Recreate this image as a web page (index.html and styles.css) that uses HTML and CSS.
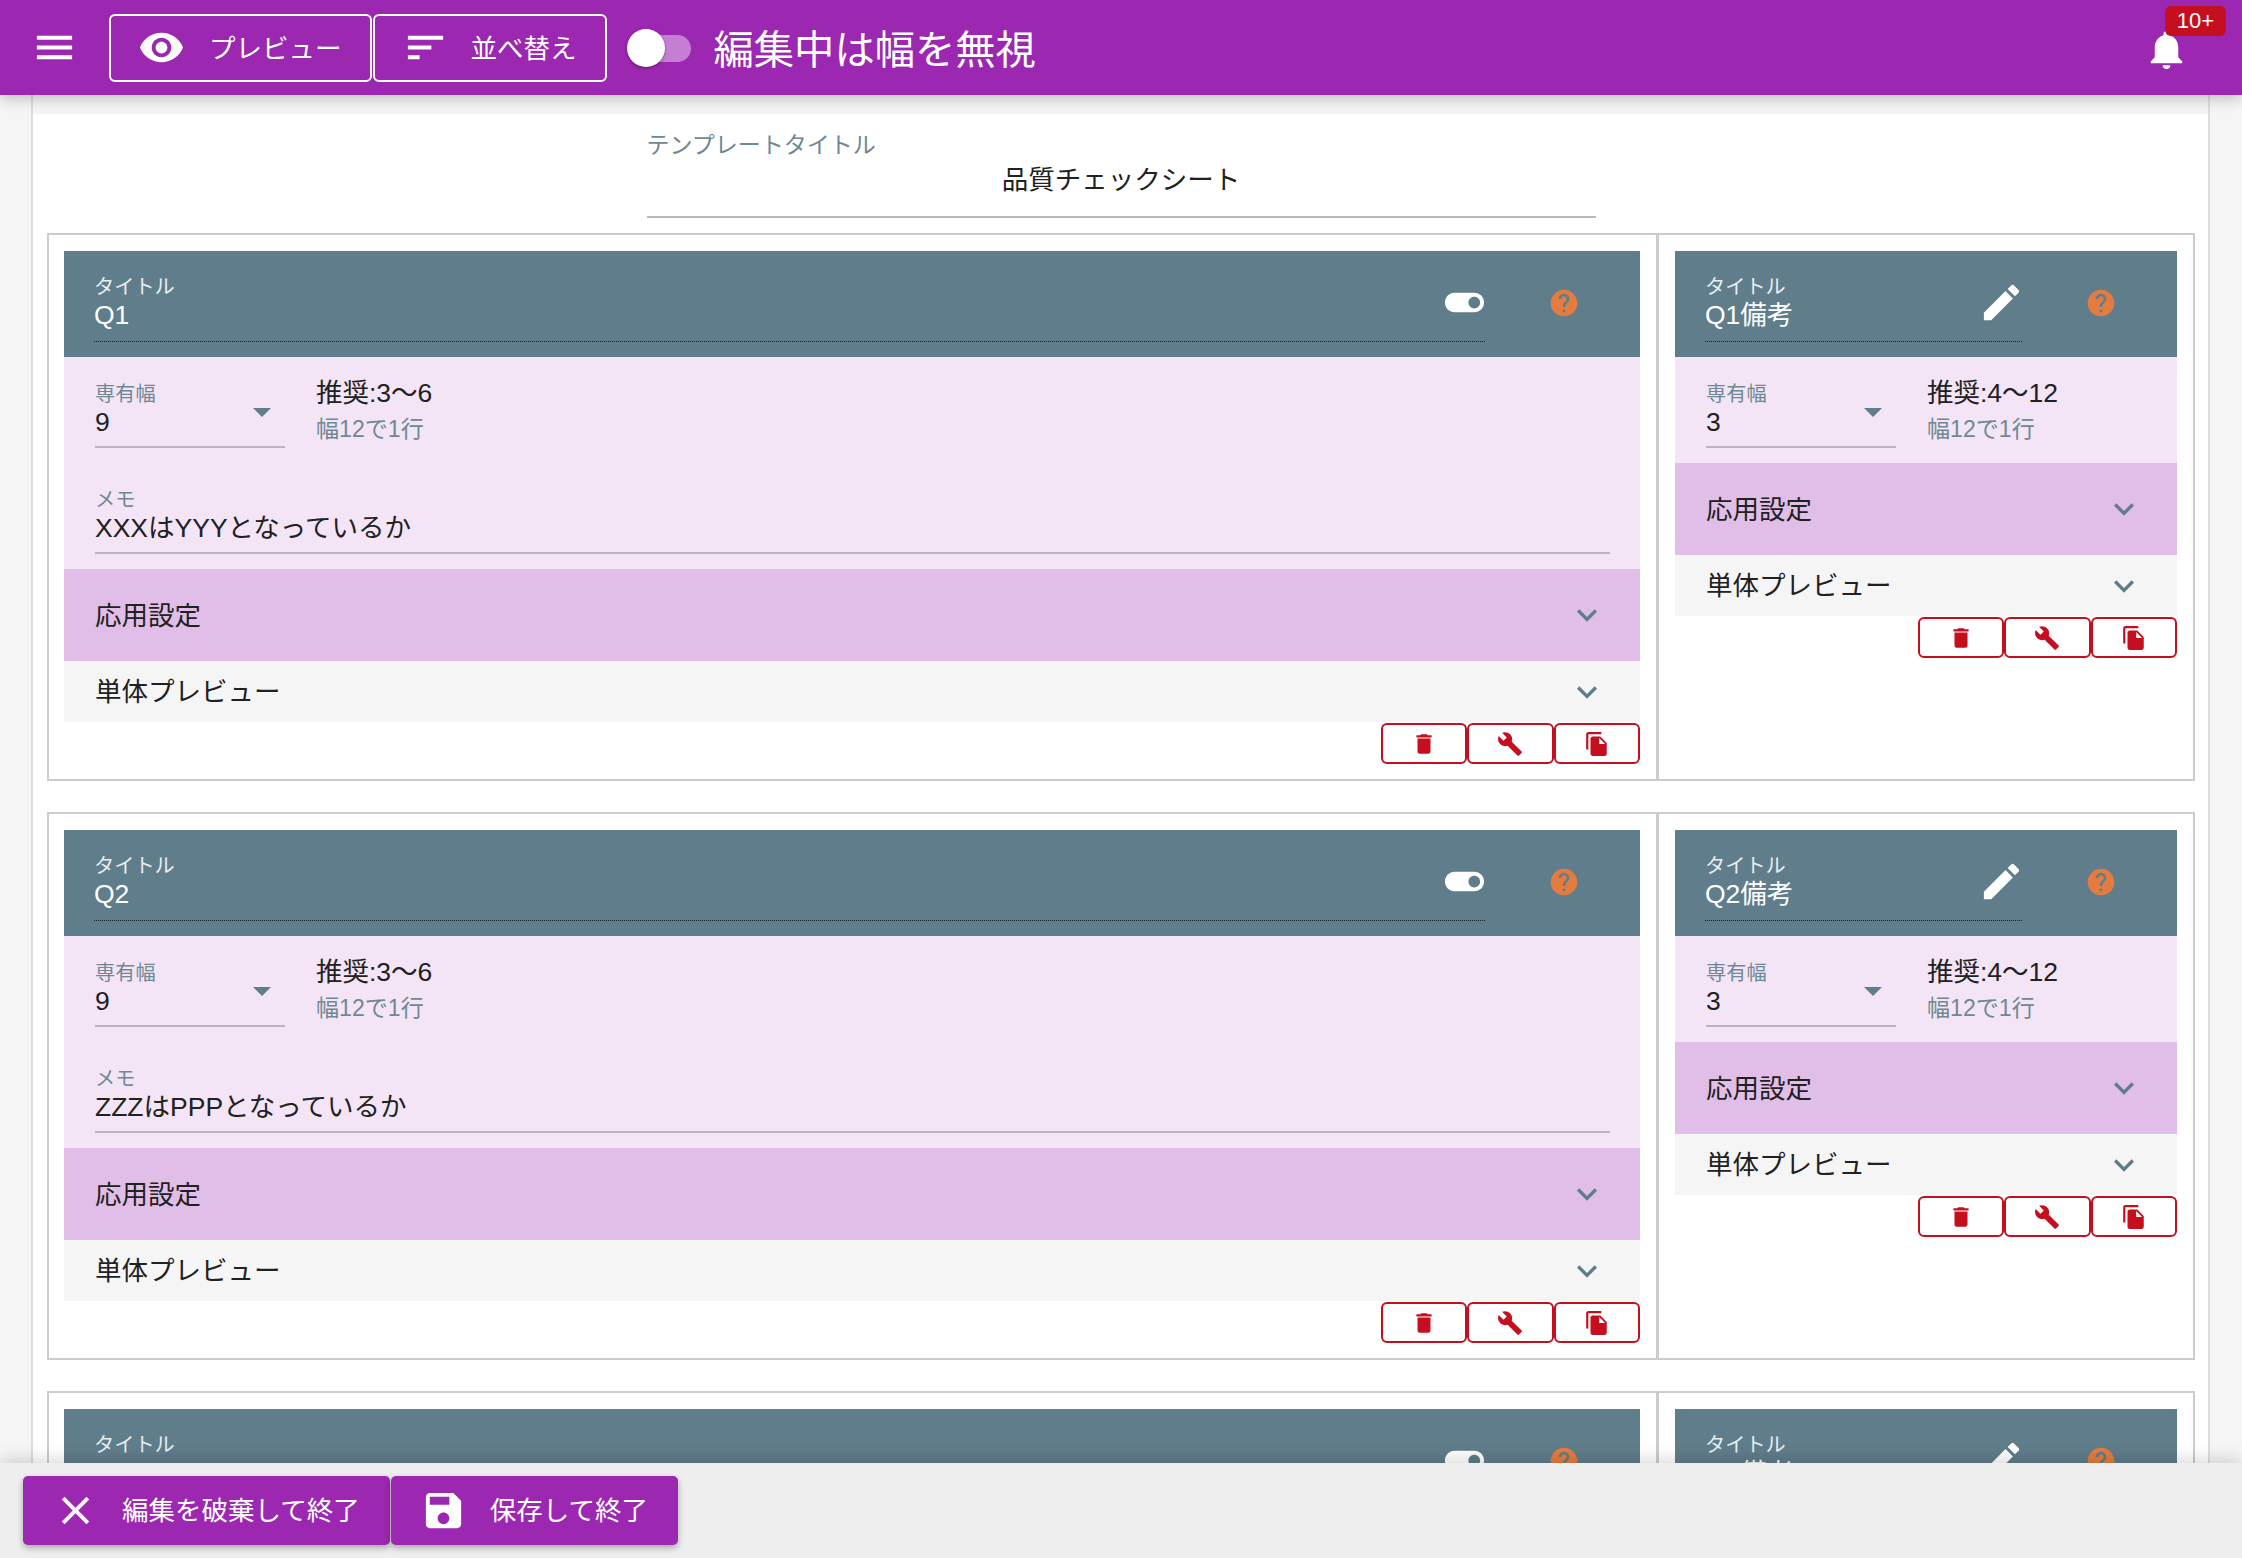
FILE: index.html
```html
<!DOCTYPE html>
<html lang="ja">
<head>
    <meta charset="UTF-8">
    <meta name="viewport" content="width=device-width, initial-scale=1.0">
    <title>テンプレート編集</title>
    <link rel="stylesheet" href="styles.css">
</head>
<body>
    <!-- Icon set, used through <use> below -->
    <svg class="icon-defs" xmlns="http://www.w3.org/2000/svg">
        <symbol id="i-menu" viewBox="0 0 24 24"><path d="M3 18h18v-2H3v2zm0-5h18v-2H3v2zm0-7v2h18V6H3z"/></symbol>
        <symbol id="i-eye" viewBox="0 0 24 24"><path d="M12 4.5C7 4.5 2.73 7.61 1 12c1.73 4.39 6 7.5 11 7.5s9.27-3.11 11-7.5c-1.73-4.39-6-7.5-11-7.5zM12 17c-2.76 0-5-2.24-5-5s2.24-5 5-5 5 2.24 5 5-2.24 5-5 5zm0-8c-1.66 0-3 1.34-3 3s1.34 3 3 3 3-1.34 3-3-1.34-3-3-3z"/></symbol>
        <symbol id="i-sort" viewBox="0 0 24 24"><path d="M3 18h6v-2H3v2zM3 6v2h18V6H3zm0 7h12v-2H3v2z"/></symbol>
        <symbol id="i-bell" viewBox="0 0 24 24"><path d="M12 22c1.1 0 2-.9 2-2h-4c0 1.1.89 2 2 2zm6-6v-5c0-3.07-1.64-5.64-4.5-6.32V4c0-.83-.67-1.5-1.5-1.5s-1.5.67-1.5 1.5v.68C7.63 5.36 6 7.92 6 11v5l-2 2v1h16v-1l-2-2z"/></symbol>
        <symbol id="i-toggle" viewBox="0 0 24 24"><path d="M17 7H7c-2.76 0-5 2.24-5 5s2.24 5 5 5h10c2.76 0 5-2.24 5-5s-2.24-5-5-5zm0 8c-1.66 0-3-1.34-3-3s1.34-3 3-3 3 1.34 3 3-1.34 3-3 3z"/></symbol>
        <symbol id="i-edit" viewBox="0 0 24 24"><path d="M3 17.25V21h3.75L17.81 9.94l-3.75-3.75L3 17.25zM20.71 7.04c.39-.39.39-1.02 0-1.41l-2.34-2.34c-.39-.39-1.02-.39-1.41 0l-1.83 1.83 3.75 3.75 1.83-1.83z"/></symbol>
        <symbol id="i-help" viewBox="0 0 24 24"><path d="M12 2C6.48 2 2 6.48 2 12s4.48 10 10 10 10-4.48 10-10S17.52 2 12 2zm1 17h-2v-2h2v2zm2.07-7.75l-.9.92C13.45 12.9 13 13.5 13 15h-2v-.5c0-1.1.45-2.1 1.17-2.83l1.24-1.26c.37-.36.59-.86.59-1.41 0-1.1-.9-2-2-2s-2 .9-2 2H8c0-2.21 1.79-4 4-4s4 1.79 4 4c0 .88-.36 1.68-.93 2.25z"/></symbol>
        <symbol id="i-chevron" viewBox="0 0 24 24"><path d="M16.59 8.59L12 13.17 7.41 8.59 6 10l6 6 6-6z"/></symbol>
        <symbol id="i-trash" viewBox="0 0 24 24"><path d="M6 19c0 1.1.9 2 2 2h8c1.1 0 2-.9 2-2V7H6v12zM19 4h-3.5l-1-1h-5l-1 1H5v2h14V4z"/></symbol>
        <symbol id="i-wrench" viewBox="0 0 24 24"><path d="M22.7 19l-9.1-9.1c.9-2.3.4-5-1.5-6.9-2-2-5-2.4-7.4-1.3L9 6 6 9 1.6 4.7C.4 7.1.9 10.1 2.9 12.1c1.9 1.9 4.6 2.4 6.9 1.5l9.1 9.1c.4.4 1 .4 1.4 0l2.3-2.3c.5-.4.5-1.1.1-1.4z"/></symbol>
        <symbol id="i-copy" viewBox="0 0 24 24"><path d="M16 1H4c-1.1 0-2 .9-2 2v14h2V3h12V1zm-1 4l6 6v10c0 1.1-.9 2-2 2H7.99C6.89 23 6 22.1 6 21l.01-14c0-1.1.89-2 1.99-2h7zm-1 7h5.5L14 6.5V12z"/></symbol>
        <symbol id="i-close" viewBox="0 0 24 24"><path d="M19 6.41L17.59 5 12 10.59 6.41 5 5 6.41 10.59 12 5 17.59 6.41 19 12 13.41 17.59 19 19 17.59 13.41 12z"/></symbol>
        <symbol id="i-save" viewBox="0 0 24 24"><path d="M17 3H5c-1.11 0-2 .9-2 2v14c0 1.1.89 2 2 2h14c1.1 0 2-.9 2-2V7l-4-4zm-5 16c-1.66 0-3-1.34-3-3s1.34-3 3-3 3 1.34 3 3-1.34 3-3 3zm3-10H5V5h10v4z"/></symbol>
    </svg>

    <div class="app">
        <!-- Top bar -->
        <header class="topbar">
            <svg class="icon-lg"><use href="#i-menu"/></svg>
            <button class="outline-btn first">
                <svg class="icon-lg"><use href="#i-eye"/></svg>
                <span>プレビュー</span>
            </button>
            <button class="outline-btn second">
                <svg class="icon-lg"><use href="#i-sort"/></svg>
                <span>並べ替え</span>
            </button>
            <div class="switch"><div class="switch-thumb"></div></div>
            <div class="topbar-title">編集中は幅を無視</div>
            <div class="bell">
                <svg class="icon-lg"><use href="#i-bell"/></svg>
                <div class="badge">10+</div>
            </div>
        </header>

        <main class="content">
            <div class="sheet">
                <div class="sheet-title">
                    <div class="sheet-title-label">テンプレートタイトル</div>
                    <div class="sheet-title-value">品質チェックシート</div>
                </div>

                <!-- Q1 -->
                <section class="row">
                    <div class="cell cell-main">
                        <div class="card-head">
                            <div class="head-field">
                                <div class="head-text">
                                    <div class="label">タイトル</div>
                                    <div class="value">Q1</div>
                                </div>
                                <svg class="icon-lg head-icon"><use href="#i-toggle"/></svg>
                            </div>
                            <svg class="help"><use href="#i-help"/></svg>
                        </div>
                        <div class="card-body">
                            <div class="width-row">
                                <div class="field select">
                                    <div class="label">専有幅</div>
                                    <div class="select-line"><div class="value">9</div><div class="arrow"></div></div>
                                </div>
                                <div class="hint">
                                    <div class="hint-main">推奨:3〜6</div>
                                    <div class="hint-sub">幅12で1行</div>
                                </div>
                            </div>
                            <div class="field">
                                <div class="label">メモ</div>
                                <div class="value">XXXはYYYとなっているか</div>
                            </div>
                        </div>
                        <div class="accordion advanced"><span>応用設定</span><svg class="chevron"><use href="#i-chevron"/></svg></div>
                        <div class="accordion preview"><span>単体プレビュー</span><svg class="chevron"><use href="#i-chevron"/></svg></div>
                        <div class="actions">
                            <button class="action-btn"><svg><use href="#i-trash"/></svg></button>
                            <button class="action-btn"><svg><use href="#i-wrench"/></svg></button>
                            <button class="action-btn"><svg><use href="#i-copy"/></svg></button>
                        </div>
                    </div>
                    <div class="cell cell-side">
                        <div class="card-head">
                            <div class="head-field">
                                <div class="head-text">
                                    <div class="label">タイトル</div>
                                    <div class="value">Q1備考</div>
                                </div>
                                <svg class="icon-lg head-icon"><use href="#i-edit"/></svg>
                            </div>
                            <svg class="help"><use href="#i-help"/></svg>
                        </div>
                        <div class="card-body">
                            <div class="width-row">
                                <div class="field select">
                                    <div class="label">専有幅</div>
                                    <div class="select-line"><div class="value">3</div><div class="arrow"></div></div>
                                </div>
                                <div class="hint">
                                    <div class="hint-main">推奨:4〜12</div>
                                    <div class="hint-sub">幅12で1行</div>
                                </div>
                            </div>
                        </div>
                        <div class="accordion advanced"><span>応用設定</span><svg class="chevron"><use href="#i-chevron"/></svg></div>
                        <div class="accordion preview"><span>単体プレビュー</span><svg class="chevron"><use href="#i-chevron"/></svg></div>
                        <div class="actions">
                            <button class="action-btn"><svg><use href="#i-trash"/></svg></button>
                            <button class="action-btn"><svg><use href="#i-wrench"/></svg></button>
                            <button class="action-btn"><svg><use href="#i-copy"/></svg></button>
                        </div>
                    </div>
                </section>

                <!-- Q2 -->
                <section class="row">
                    <div class="cell cell-main">
                        <div class="card-head">
                            <div class="head-field">
                                <div class="head-text">
                                    <div class="label">タイトル</div>
                                    <div class="value">Q2</div>
                                </div>
                                <svg class="icon-lg head-icon"><use href="#i-toggle"/></svg>
                            </div>
                            <svg class="help"><use href="#i-help"/></svg>
                        </div>
                        <div class="card-body">
                            <div class="width-row">
                                <div class="field select">
                                    <div class="label">専有幅</div>
                                    <div class="select-line"><div class="value">9</div><div class="arrow"></div></div>
                                </div>
                                <div class="hint">
                                    <div class="hint-main">推奨:3〜6</div>
                                    <div class="hint-sub">幅12で1行</div>
                                </div>
                            </div>
                            <div class="field">
                                <div class="label">メモ</div>
                                <div class="value">ZZZはPPPとなっているか</div>
                            </div>
                        </div>
                        <div class="accordion advanced"><span>応用設定</span><svg class="chevron"><use href="#i-chevron"/></svg></div>
                        <div class="accordion preview"><span>単体プレビュー</span><svg class="chevron"><use href="#i-chevron"/></svg></div>
                        <div class="actions">
                            <button class="action-btn"><svg><use href="#i-trash"/></svg></button>
                            <button class="action-btn"><svg><use href="#i-wrench"/></svg></button>
                            <button class="action-btn"><svg><use href="#i-copy"/></svg></button>
                        </div>
                    </div>
                    <div class="cell cell-side">
                        <div class="card-head">
                            <div class="head-field">
                                <div class="head-text">
                                    <div class="label">タイトル</div>
                                    <div class="value">Q2備考</div>
                                </div>
                                <svg class="icon-lg head-icon"><use href="#i-edit"/></svg>
                            </div>
                            <svg class="help"><use href="#i-help"/></svg>
                        </div>
                        <div class="card-body">
                            <div class="width-row">
                                <div class="field select">
                                    <div class="label">専有幅</div>
                                    <div class="select-line"><div class="value">3</div><div class="arrow"></div></div>
                                </div>
                                <div class="hint">
                                    <div class="hint-main">推奨:4〜12</div>
                                    <div class="hint-sub">幅12で1行</div>
                                </div>
                            </div>
                        </div>
                        <div class="accordion advanced"><span>応用設定</span><svg class="chevron"><use href="#i-chevron"/></svg></div>
                        <div class="accordion preview"><span>単体プレビュー</span><svg class="chevron"><use href="#i-chevron"/></svg></div>
                        <div class="actions">
                            <button class="action-btn"><svg><use href="#i-trash"/></svg></button>
                            <button class="action-btn"><svg><use href="#i-wrench"/></svg></button>
                            <button class="action-btn"><svg><use href="#i-copy"/></svg></button>
                        </div>
                    </div>
                </section>

                <!-- Q3, cut off by the footer -->
                <section class="row">
                    <div class="cell cell-main">
                        <div class="card-head">
                            <div class="head-field">
                                <div class="head-text">
                                    <div class="label">タイトル</div>
                                    <div class="value">Q3</div>
                                </div>
                                <svg class="icon-lg head-icon"><use href="#i-toggle"/></svg>
                            </div>
                            <svg class="help"><use href="#i-help"/></svg>
                        </div>
                    </div>
                    <div class="cell cell-side">
                        <div class="card-head">
                            <div class="head-field">
                                <div class="head-text">
                                    <div class="label">タイトル</div>
                                    <div class="value">Q3備考</div>
                                </div>
                                <svg class="icon-lg head-icon"><use href="#i-edit"/></svg>
                            </div>
                            <svg class="help"><use href="#i-help"/></svg>
                        </div>
                    </div>
                </section>
            </div>
        </main>

        <!-- Footer actions -->
        <footer class="footer">
            <button class="solid-btn">
                <svg class="icon-lg"><use href="#i-close"/></svg>
                <span>編集を破棄して終了</span>
            </button>
            <button class="solid-btn">
                <svg class="icon-lg"><use href="#i-save"/></svg>
                <span>保存して終了</span>
            </button>
        </footer>
    </div>
</body>
</html>
```

FILE: styles.css
```css
/* General */
html, body {
    margin: 0;
    padding: 0;
    height: 100%;
}
body {
    font-family: "Liberation Sans", "Noto Sans CJK JP", sans-serif;
    font-size: 26.5px;
    color: #212121;
    background-color: #f5f5f5;
    overflow: hidden;
}
button {
    font-family: inherit;
    font-size: inherit;
    cursor: pointer;
}
svg {
    fill: currentColor;
    flex: none;
    display: block;
}
.icon-defs {
    display: none;
}
.icon-lg {
    width: 47px;
    height: 47px;
}
.app {
    height: 100vh;
    display: flex;
    flex-direction: column;
}

/* Top bar */
.topbar {
    height: 95px;
    flex: none;
    display: flex;
    align-items: center;
    padding-left: 31px;
    background-color: #9c27b0;
    color: #fff;
    box-shadow: 0 3px 14px rgba(0, 0, 0, 0.25);
    position: relative;
    z-index: 2;
}
.outline-btn {
    height: 68px;
    display: flex;
    align-items: center;
    gap: 24px;
    padding: 0 28px 0 27px;
    background: none;
    border: 2px solid #fff;
    border-radius: 6px;
    color: #fff;
}
.outline-btn.first {
    margin-left: 31px;
}
.outline-btn.second {
    margin-left: 1px;
    gap: 22px;
}
.outline-btn span {
    margin-bottom: 2px;
}
.switch {
    width: 64px;
    height: 38px;
    margin-left: 20px;
    position: relative;
}
.switch::before {
    content: "";
    position: absolute;
    left: 6px;
    right: 0;
    top: 6px;
    bottom: 5px;
    border-radius: 14px;
    background-color: #c47ed3;
}
.switch-thumb {
    position: absolute;
    left: 0;
    top: 0;
    width: 38px;
    height: 38px;
    border-radius: 50%;
    background-color: #fff;
    box-shadow: 0 1px 3px rgba(0, 0, 0, 0.4);
}
.topbar-title {
    margin: 0 0 2px 23px;
    font-size: 40.3px;
}
.bell {
    margin-left: auto;
    margin-right: 52px;
    margin-top: 4px;
    position: relative;
}
.badge {
    position: absolute;
    left: 22px;
    top: -20px;
    width: 61px;
    height: 30px;
    line-height: 30px;
    text-align: center;
    font-size: 22px;
    border-radius: 6px;
    background-color: #c50f1f;
}

/* Sheet */
.content {
    flex: 1;
    min-height: 0;
    overflow: hidden;
}
.sheet {
    margin: 0 32px 0 31px;
    padding: 38px 13px 0 14px;
    border-left: 2px solid #ddd;
    border-right: 2px solid #ddd;
    background: linear-gradient(#f5f5f5 19px, #fff 19px);
}
.sheet-title {
    width: 949px;
    margin: 0 auto 15px;
    padding-bottom: 20px;
    border-bottom: 2px solid #bbb;
}
.sheet-title-label {
    font-size: 23px;
    line-height: 24px;
    color: #6f8894;
}
.sheet-title-value {
    margin-top: 7px;
    line-height: 32px;
    text-align: center;
}
.row {
    display: grid;
    grid-template-columns: 9fr 3fr;
    margin-bottom: 31px;
}
.cell {
    border: 2px solid #ccc;
    padding: 16px 16px 15px 15px;
}
.cell-side {
    border-left-width: 1px;
    padding-left: 16px;
}

/* Card header */
.card-head {
    height: 106px;
    box-sizing: border-box;
    display: flex;
    align-items: flex-start;
    gap: 63px;
    padding: 23px 60px 0 30px;
    background-color: #607d8b;
    color: #fff;
}
.head-field {
    flex: 1;
    display: flex;
    padding-bottom: 10px;
    border-bottom: 1px dotted rgba(0, 0, 0, 0.75);
}
.head-text {
    flex: 1;
}
.head-icon {
    margin: 5px -3px 0 0;
}
.help {
    width: 32px;
    height: 32px;
    margin-top: 13px;
    color: #e57c3f;
}
.label {
    font-size: 20.2px;
    line-height: 26px;
    color: #6f8894;
}
.value {
    line-height: 32px;
    margin-top: -1px;
}
.card-head .label {
    color: #e8edf0;
}

/* Card body */
.card-body {
    display: flex;
    flex-direction: column;
    gap: 39px;
    padding: 24px 30px 15px 31px;
    background-color: #f3e5f5;
}
.width-row {
    display: flex;
    gap: 31px;
}
.field {
    padding-bottom: 8px;
    border-bottom: 2px solid #bdb3c0;
}
.select {
    width: 190px;
}
.select-line {
    display: flex;
    justify-content: space-between;
}
.arrow {
    width: 0;
    height: 0;
    margin: 1px 14px 0 0;
    border-left: 9.5px solid transparent;
    border-right: 9.5px solid transparent;
    border-top: 9px solid #607d8b;
}
.hint {
    margin-top: -4px;
}
.hint-main {
    line-height: 32px;
}
.hint-sub {
    margin-top: 6px;
    font-size: 23.1px;
    line-height: 28px;
    color: #6f8894;
}

/* Accordions */
.accordion {
    display: flex;
    align-items: center;
    justify-content: space-between;
    padding: 0 33px 0 31px;
}
.accordion span {
    margin-bottom: 4px;
}
.accordion.advanced {
    height: 92px;
    background-color: #e1bee7;
}
.accordion.preview {
    height: 61px;
    background-color: #f5f5f5;
}
.chevron {
    width: 40px;
    height: 40px;
    color: #607d8b;
}

/* Small red buttons */
.actions {
    display: flex;
    justify-content: flex-end;
    margin-top: 1px;
}
.action-btn {
    width: 86.5px;
    height: 41px;
    padding: 0;
    display: flex;
    align-items: center;
    justify-content: center;
    background-color: #fff;
    border: 2px solid #c50f1f;
    border-radius: 6px;
    color: #c50f1f;
}
.action-btn svg {
    width: 26px;
    height: 26px;
}

/* Footer */
.footer {
    height: 95px;
    flex: none;
    box-sizing: border-box;
    display: flex;
    gap: 1px;
    padding: 13px 0 0 23px;
    background-color: #eee;
    box-shadow: 0 -4px 16px rgba(0, 0, 0, 0.15);
    position: relative;
    z-index: 2;
}
.solid-btn {
    height: 69px;
    display: flex;
    align-items: center;
    gap: 23px;
    padding: 0 30px 0 29px;
    background-color: #9c27b0;
    border: none;
    border-radius: 5px;
    color: #fff;
    box-shadow: 0 3px 6px rgba(0, 0, 0, 0.3);
}
.solid-btn span {
    margin-bottom: 4px;
}
```
